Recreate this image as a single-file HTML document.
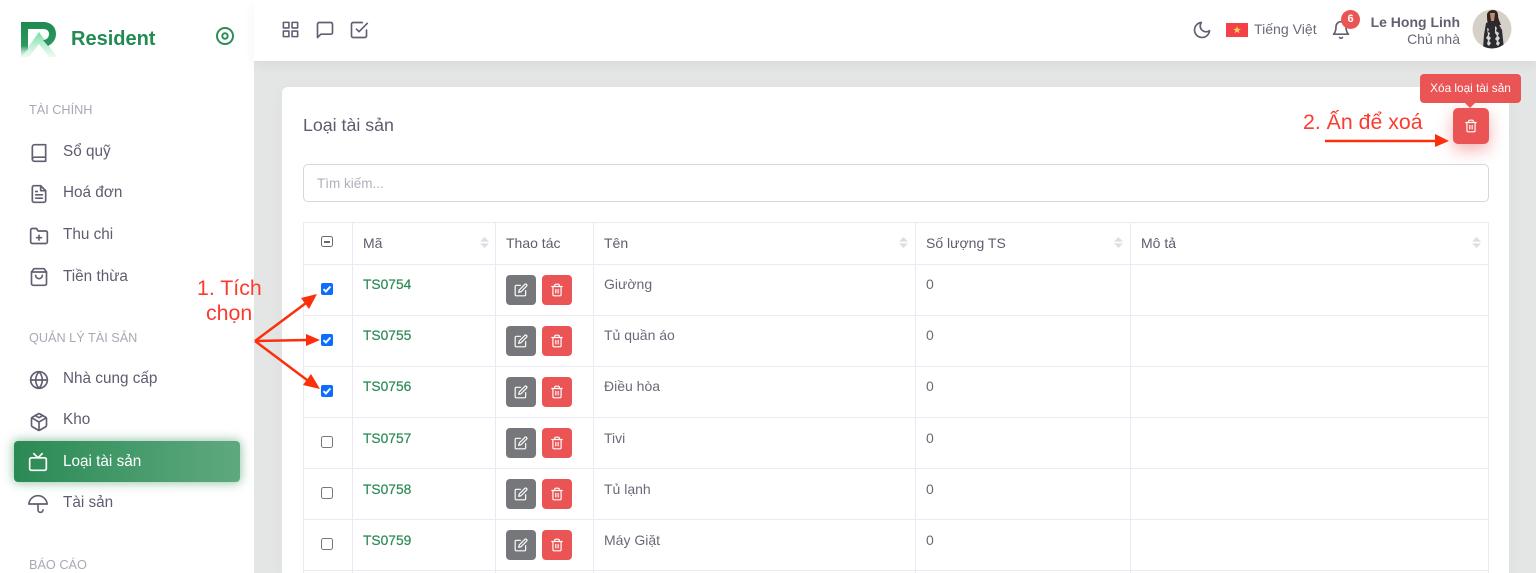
<!DOCTYPE html>
<html lang="vi"><head><meta charset="utf-8"><title>Loại tài sản</title>
<style>
*{box-sizing:border-box}
html{margin:0;padding:0;width:1536px;height:573px;overflow:hidden;background:#e4e5e5}
body{margin:0;padding:0;width:1536px;height:573px;overflow:hidden;position:relative;background:#e4e5e5;font-family:"Liberation Sans","Noto Sans CJK SC",sans-serif;color:#5e5c6e;filter:blur(.3px)}
.a{position:absolute;white-space:nowrap}
#side{position:absolute;left:0;top:0;width:254px;height:573px;background:#fff}
#top{position:absolute;left:254px;top:0;width:1282px;height:61px;background:#fff;box-shadow:0 4px 12px rgba(0,0,0,.05)}
.sec{position:absolute;left:29px;font-size:12.7px;color:#a9a8b5;line-height:16px;white-space:nowrap}
.item{position:absolute;left:63px;font-size:15.3px;line-height:20px;color:#5e5c6e;white-space:nowrap}
svg.i{position:absolute;fill:none;stroke:#625f72;stroke-width:2;stroke-linecap:round;stroke-linejoin:round}
#card{position:absolute;left:282px;top:87px;width:1227px;height:486px;background:#fff;border-radius:6px 6px 0 0;box-shadow:0 4px 20px rgba(0,0,0,.03)}
.ln{position:absolute;height:1px;left:303px;width:1186px;background:#ebe9f3}
.lv{position:absolute;width:1px;top:222px;height:351px;background:#ebe9f3}
.th{position:absolute;font-size:14px;line-height:16px;color:#5e5c6e;white-space:nowrap;top:235px}
.code{position:absolute;left:363px;font-size:13.8px;line-height:16px;color:#2e8b57;white-space:nowrap;-webkit-text-stroke:.2px #2e8b57}
.nm{position:absolute;left:604px;font-size:14px;line-height:16px;color:#6b6978;white-space:nowrap}
.z{position:absolute;left:926px;font-size:14px;line-height:16px;color:#6b6978}
.btn{position:absolute;width:30px;height:30px;border-radius:4px}
.btn svg{position:absolute;left:8px;top:8px;width:14px;height:14px;fill:none;stroke:#fff;stroke-width:2;stroke-linecap:round;stroke-linejoin:round}
.g{background:#75777a}.r{background:#ea5455}
.cb{position:absolute;left:321px;width:12px;height:12px;border-radius:2px;background:#0d6efd}
.cb svg{position:absolute;left:0;top:0;width:12px;height:12px;fill:none;stroke:#fff;stroke-width:2}
.cu{position:absolute;left:321px;width:12px;height:12px;border-radius:2.5px;border:1px solid #77767c;background:#fff}
.sort{position:absolute;width:9px;height:11px}
.red{position:absolute;color:#fb3b30;font-size:21.3px;line-height:26px;white-space:nowrap}
</style></head><body>

<div id="side"></div>
<div id="top"></div>

<!-- logo -->
<svg class="a" style="left:21px;top:22px" width="36" height="36" viewBox="0 0 36 36">
<defs>
<linearGradient id="lg1" x1="0" y1="0" x2="0" y2="1"><stop offset="0" stop-color="#1f8a50"/><stop offset=".68" stop-color="#2c9860"/><stop offset="1" stop-color="#b8e8cc" stop-opacity=".3"/></linearGradient>
<linearGradient id="lg2" x1="0" y1="0" x2="0" y2="1"><stop offset="0" stop-color="#6fdc9f"/><stop offset="1" stop-color="#d8f7e4" stop-opacity=".5"/></linearGradient>
</defs>
<path d="M18 10L36 35H28L18 22L8 35H0Z" fill="url(#lg2)"/>
<path d="M0 0H22C30 0 35 5 35 12C35 18 31 22 27 24L22 18C26 18 28 15 28 12C28 9 26 7 22 7H7V27L0 35Z" fill="url(#lg1)"/>
</svg>
<div class="a" style="left:71px;top:27px;font-size:20px;line-height:24px;font-weight:700;color:#238a52">Resident</div>
<svg class="a" style="left:215px;top:26px" width="20" height="20" viewBox="0 0 20 20" fill="none" stroke="#2b8d57" stroke-width="2"><circle cx="10" cy="10" r="8"/><circle cx="10" cy="10" r="2.7"/></svg>

<!-- sidebar -->
<div class="sec" style="top:102px">TÀI CHÍNH</div>
<svg class="i" style="left:29px;top:143px" width="20" height="20" viewBox="0 0 24 24"><path d="M4 19.5A2.5 2.5 0 0 1 6.500 17H20"/><path d="M6.500 2H20v20H6.500A2.500 2.500 0 0 1 4 19.500v-15A2.500 2.500 0 0 1 6.500 2z"/></svg>
<div class="item" style="top:142px">Sổ quỹ</div>
<svg class="i" style="left:29px;top:184px" width="20" height="20" viewBox="0 0 24 24"><path d="M14 2H6a2 2 0 0 0-2 2v16a2 2 0 0 0 2 2h12a2 2 0 0 0 2-2V8z"/><path d="M14 2v6h6M16 13H8M16 17H8M10 9H8"/></svg>
<div class="item" style="top:183px">Hoá đơn</div>
<svg class="i" style="left:29px;top:226px" width="20" height="20" viewBox="0 0 24 24"><path d="M22 19a2 2 0 0 1-2 2H4a2 2 0 0 1-2-2V5a2 2 0 0 1 2-2h5l2 3h9a2 2 0 0 1 2 2z"/><path d="M12 11v6M9 14h6"/></svg>
<div class="item" style="top:225px">Thu chi</div>
<svg class="i" style="left:29px;top:267px" width="20" height="20" viewBox="0 0 24 24"><path d="M6 2 3 6v14a2 2 0 0 0 2 2h14a2 2 0 0 0 2-2V6l-3-4z"/><path d="M3 6h18M16 10a4 4 0 0 1-8 0"/></svg>
<div class="item" style="top:267px">Tiền thừa</div>

<div class="sec" style="top:330px">QUẢN LÝ TÀI SẢN</div>
<svg class="i" style="left:29px;top:370px" width="20" height="20" viewBox="0 0 24 24"><circle cx="12" cy="12" r="10"/><path d="M2 12h20M12 2a15.300 15.300 0 0 1 4 10 15.300 15.300 0 0 1-4 10 15.300 15.300 0 0 1-4-10 15.300 15.300 0 0 1 4-10z"/></svg>
<div class="item" style="top:369px">Nhà cung cấp</div>
<svg class="i" style="left:29px;top:412px" width="20" height="20" viewBox="0 0 24 24"><path d="M21 16V8a2 2 0 0 0-1-1.730l-7-4a2 2 0 0 0-2 0l-7 4A2 2 0 0 0 3 8v8a2 2 0 0 0 1 1.730l7 4a2 2 0 0 0 2 0l7-4A2 2 0 0 0 21 16z"/><path d="M7.500 4.200l4.500 2.600 4.500-2.600M3.300 7 12 12l8.700-5M12 22V12"/></svg>
<div class="item" style="top:410px">Kho</div>

<div class="a" style="left:14px;top:441px;width:226px;height:41px;border-radius:4px;background:linear-gradient(90deg,#2a8a54,#5fa97f);box-shadow:0 0 10px 1px rgba(46,139,87,.5)"></div>
<svg class="i" style="left:28px;top:452px;stroke:#fff" width="20" height="20" viewBox="0 0 24 24"><rect x="2" y="7" width="20" height="15" rx="2"/><path d="M17 2l-5 5-5-5"/></svg>
<div class="item" style="top:452px;color:#fff">Loại tài sản</div>

<svg class="i" style="left:28px;top:494px" width="20" height="20" viewBox="0 0 24 24"><path d="M23 12a11.050 11.050 0 0 0-22 0zm-5 7a3 3 0 0 1-6 0v-7"/></svg>
<div class="item" style="top:493px">Tài sản</div>
<div class="sec" style="top:557px">BÁO CÁO</div>

<!-- top icons -->
<svg class="i" style="left:281px;top:20px" width="19" height="19" viewBox="0 0 24 24"><rect x="3" y="3" width="7" height="7"/><rect x="14" y="3" width="7" height="7"/><rect x="14" y="14" width="7" height="7"/><rect x="3" y="14" width="7" height="7"/></svg>
<svg class="i" style="left:315px;top:20px" width="20" height="20" viewBox="0 0 24 24"><path d="M21 15a2 2 0 0 1-2 2H7l-4 4V5a2 2 0 0 1 2-2h14a2 2 0 0 1 2 2z"/></svg>
<svg class="i" style="left:349px;top:20px" width="20" height="20" viewBox="0 0 24 24"><path d="M9 11l3 3L22 4"/><path d="M21 12v7a2 2 0 0 1-2 2H5a2 2 0 0 1-2-2V5a2 2 0 0 1 2-2h11"/></svg>

<!-- top right -->
<svg class="i" style="left:1192px;top:20px" width="20" height="20" viewBox="0 0 24 24"><path d="M21 12.790A9 9 0 1 1 11.210 3 7 7 0 0 0 21 12.790z"/></svg>
<svg class="a" style="left:1226px;top:23px" width="22" height="14" viewBox="0 0 22 14"><rect width="22" height="14" fill="#f5404a"/><path d="M11 3.200l1 2.700h2.900l-2.300 1.700.9 2.700-2.500-1.700-2.400 1.700.9-2.700-2.300-1.700H10z" fill="#fbd94e"/></svg>
<div class="a" style="left:1254px;top:21px;font-size:14.1px;line-height:17px;color:#6b6978">Tiếng Việt</div>
<svg class="i" style="left:1331px;top:20px" width="20" height="20" viewBox="0 0 24 24"><path d="M18 8A6 6 0 0 0 6 8c0 7-3 9-3 9h18s-3-2-3-9"/><path d="M13.730 21a2 2 0 0 1-3.460 0"/></svg>
<div class="a" style="left:1341px;top:10px;width:19px;height:19px;border-radius:50%;background:#ea5455;color:#fff;font-size:11px;font-weight:700;line-height:19px;text-align:center">6</div>
<div class="a" style="right:76px;top:14px;font-size:14px;line-height:16px;font-weight:700;color:#625f72">Le Hong Linh</div>
<div class="a" style="right:76px;top:31px;font-size:14px;line-height:16px;color:#6b6978">Chủ nhà</div>
<svg class="a" style="left:1472px;top:9px" width="40" height="40" viewBox="0 0 40 40">
<defs><clipPath id="av"><circle cx="20" cy="20" r="19.500"/></clipPath></defs>
<g clip-path="url(#av)"><rect width="40" height="40" fill="#d6d1c8"/>
<path d="M15 6c0-3 3-5 6-5s5 2 5 5c0 4 2 7 3 10l-4 0-9-1c-1-3-1-6-1-9z" fill="#33231e"/>
<path d="M18 4h5l-1 8h-3z" fill="#bb8c76"/>
<path d="M14 14l6-2 6 2 4 7 2 19H11l1-14z" fill="#2b2b30"/>
<path d="M15 19l2 1-1 3 2 1-1 3 2 2-2 3 2 2-2 3-2-2 1-4-2-2 2-3zM23 17l2 2-1 3 3 2-1 3 2 2-2 3 2 2-2 3-2-2 1-3-2-2 2-3-2-3z" fill="#d8d6d2"/></g></svg>

<!-- card -->
<div id="card"></div>
<div class="a" style="left:303px;top:115px;font-size:17.8px;line-height:20px;color:#5e5c6e">Loại tài sản</div>
<div class="a" style="left:303px;top:164px;width:1186px;height:38px;border:1px solid #d8d6de;border-radius:5px;background:#fff"></div>
<div class="a" style="left:317px;top:176px;font-size:13.5px;line-height:16px;color:#b0afba">Tìm kiếm...</div>

<!-- delete + tooltip -->
<div class="a" style="left:1453px;top:108px;width:36px;height:36px;border-radius:5px;background:#ea5455;box-shadow:0 6px 16px rgba(234,84,85,.45)"></div>
<svg class="a" style="left:1464px;top:119px;fill:none;stroke:#fff;stroke-width:2;stroke-linecap:round;stroke-linejoin:round" width="14" height="14" viewBox="0 0 24 24"><path d="M3 6h18M19 6v14a2 2 0 0 1-2 2H7a2 2 0 0 1-2-2V6m3 0V4a2 2 0 0 1 2-2h4a2 2 0 0 1 2 2v2M10 11v6M14 11v6"/></svg>
<div class="a" style="left:1420px;top:74px;width:101px;height:29px;border-radius:4px;background:#ea5455;color:#fff;font-size:11.8px;line-height:29px;text-align:center">Xóa loại tài sản</div>
<div class="a" style="left:1465px;top:103px;width:0;height:0;border-left:5px solid transparent;border-right:5px solid transparent;border-top:5px solid #ea5455"></div>

<!-- table lines -->
<div class="ln" style="top:222px"></div><div class="ln" style="top:264px"></div><div class="ln" style="top:315px"></div><div class="ln" style="top:366px"></div><div class="ln" style="top:417px"></div><div class="ln" style="top:468px"></div><div class="ln" style="top:519px"></div><div class="ln" style="top:570px"></div>
<div class="lv" style="left:303px"></div><div class="lv" style="left:352px"></div><div class="lv" style="left:495px"></div><div class="lv" style="left:593px"></div><div class="lv" style="left:915px"></div><div class="lv" style="left:1130px"></div><div class="lv" style="left:1488px"></div>

<!-- header -->
<div class="a" style="left:321px;top:236px;width:12px;height:11px;border:1px solid #6b6a70;border-radius:2.5px"><div style="position:absolute;left:2px;top:3.5px;width:6px;height:2px;background:#6b6a70"></div></div>
<div class="th" style="left:363px">Mã</div><div class="th" style="left:506px">Thao tác</div><div class="th" style="left:604px">Tên</div><div class="th" style="left:926px">Số lượng TS</div><div class="th" style="left:1141px">Mô tả</div>
<svg class="sort" style="left:480px;top:237px" viewBox="0 0 9 13" preserveAspectRatio="none"><path d="M4.500 0L9 5.500H0zM4.500 13L0 7.500h9z" fill="#dedde4"/></svg>
<svg class="sort" style="left:899px;top:237px" viewBox="0 0 9 13" preserveAspectRatio="none"><path d="M4.500 0L9 5.500H0zM4.500 13L0 7.500h9z" fill="#dedde4"/></svg>
<svg class="sort" style="left:1114px;top:237px" viewBox="0 0 9 13" preserveAspectRatio="none"><path d="M4.500 0L9 5.500H0zM4.500 13L0 7.500h9z" fill="#dedde4"/></svg>
<svg class="sort" style="left:1472px;top:237px" viewBox="0 0 9 13" preserveAspectRatio="none"><path d="M4.500 0L9 5.500H0zM4.500 13L0 7.500h9z" fill="#dedde4"/></svg>

<!-- rows -->
<div class="cb" style="top:283px"><svg viewBox="0 0 12 12"><path d="M2.500 6.200l2.400 2.300 4.500-5"/></svg></div>
<div class="code" style="top:277px">TS0754</div><div class="nm" style="top:276px">Giường</div><div class="z" style="top:276px">0</div>
<div class="btn g" style="left:506px;top:275px"><svg viewBox="0 0 24 24"><path d="M11 4H4a2 2 0 0 0-2 2v14a2 2 0 0 0 2 2h14a2 2 0 0 0 2-2v-7"/><path d="M18.500 2.500a2.121 2.121 0 0 1 3 3L12 15l-4 1 1-4z"/></svg></div>
<div class="btn r" style="left:542px;top:275px"><svg viewBox="0 0 24 24"><path d="M3 6h18M19 6v14a2 2 0 0 1-2 2H7a2 2 0 0 1-2-2V6m3 0V4a2 2 0 0 1 2-2h4a2 2 0 0 1 2 2v2M10 11v6M14 11v6"/></svg></div>

<div class="cb" style="top:334px"><svg viewBox="0 0 12 12"><path d="M2.500 6.200l2.400 2.300 4.500-5"/></svg></div>
<div class="code" style="top:328px">TS0755</div><div class="nm" style="top:327px">Tủ quần áo</div><div class="z" style="top:327px">0</div>
<div class="btn g" style="left:506px;top:326px"><svg viewBox="0 0 24 24"><path d="M11 4H4a2 2 0 0 0-2 2v14a2 2 0 0 0 2 2h14a2 2 0 0 0 2-2v-7"/><path d="M18.500 2.500a2.121 2.121 0 0 1 3 3L12 15l-4 1 1-4z"/></svg></div>
<div class="btn r" style="left:542px;top:326px"><svg viewBox="0 0 24 24"><path d="M3 6h18M19 6v14a2 2 0 0 1-2 2H7a2 2 0 0 1-2-2V6m3 0V4a2 2 0 0 1 2-2h4a2 2 0 0 1 2 2v2M10 11v6M14 11v6"/></svg></div>

<div class="cb" style="top:384.5px"><svg viewBox="0 0 12 12"><path d="M2.500 6.200l2.400 2.300 4.500-5"/></svg></div>
<div class="code" style="top:379px">TS0756</div><div class="nm" style="top:378px">Điều hòa</div><div class="z" style="top:378px">0</div>
<div class="btn g" style="left:506px;top:377px"><svg viewBox="0 0 24 24"><path d="M11 4H4a2 2 0 0 0-2 2v14a2 2 0 0 0 2 2h14a2 2 0 0 0 2-2v-7"/><path d="M18.500 2.500a2.121 2.121 0 0 1 3 3L12 15l-4 1 1-4z"/></svg></div>
<div class="btn r" style="left:542px;top:377px"><svg viewBox="0 0 24 24"><path d="M3 6h18M19 6v14a2 2 0 0 1-2 2H7a2 2 0 0 1-2-2V6m3 0V4a2 2 0 0 1 2-2h4a2 2 0 0 1 2 2v2M10 11v6M14 11v6"/></svg></div>

<div class="cu" style="top:435.5px"></div>
<div class="code" style="top:431px">TS0757</div><div class="nm" style="top:430px">Tivi</div><div class="z" style="top:430px">0</div>
<div class="btn g" style="left:506px;top:428px"><svg viewBox="0 0 24 24"><path d="M11 4H4a2 2 0 0 0-2 2v14a2 2 0 0 0 2 2h14a2 2 0 0 0 2-2v-7"/><path d="M18.500 2.500a2.121 2.121 0 0 1 3 3L12 15l-4 1 1-4z"/></svg></div>
<div class="btn r" style="left:542px;top:428px"><svg viewBox="0 0 24 24"><path d="M3 6h18M19 6v14a2 2 0 0 1-2 2H7a2 2 0 0 1-2-2V6m3 0V4a2 2 0 0 1 2-2h4a2 2 0 0 1 2 2v2M10 11v6M14 11v6"/></svg></div>

<div class="cu" style="top:486.5px"></div>
<div class="code" style="top:482px">TS0758</div><div class="nm" style="top:481px">Tủ lạnh</div><div class="z" style="top:481px">0</div>
<div class="btn g" style="left:506px;top:479px"><svg viewBox="0 0 24 24"><path d="M11 4H4a2 2 0 0 0-2 2v14a2 2 0 0 0 2 2h14a2 2 0 0 0 2-2v-7"/><path d="M18.500 2.500a2.121 2.121 0 0 1 3 3L12 15l-4 1 1-4z"/></svg></div>
<div class="btn r" style="left:542px;top:479px"><svg viewBox="0 0 24 24"><path d="M3 6h18M19 6v14a2 2 0 0 1-2 2H7a2 2 0 0 1-2-2V6m3 0V4a2 2 0 0 1 2-2h4a2 2 0 0 1 2 2v2M10 11v6M14 11v6"/></svg></div>

<div class="cu" style="top:537.5px"></div>
<div class="code" style="top:533px">TS0759</div><div class="nm" style="top:532px">Máy Giặt</div><div class="z" style="top:532px">0</div>
<div class="btn g" style="left:506px;top:530px"><svg viewBox="0 0 24 24"><path d="M11 4H4a2 2 0 0 0-2 2v14a2 2 0 0 0 2 2h14a2 2 0 0 0 2-2v-7"/><path d="M18.500 2.500a2.121 2.121 0 0 1 3 3L12 15l-4 1 1-4z"/></svg></div>
<div class="btn r" style="left:542px;top:530px"><svg viewBox="0 0 24 24"><path d="M3 6h18M19 6v14a2 2 0 0 1-2 2H7a2 2 0 0 1-2-2V6m3 0V4a2 2 0 0 1 2-2h4a2 2 0 0 1 2 2v2M10 11v6M14 11v6"/></svg></div>

<!-- annotations -->
<div class="red" style="left:197px;top:275px">1. Tích</div>
<div class="red" style="left:206px;top:300px">chọn</div>
<div class="red" style="left:1303px;top:109px">2. Ấn để xoá</div>
<svg class="a" style="left:0;top:0" width="1536" height="573" viewBox="0 0 1536 573" fill="none">
<g stroke="#fb2f0c" stroke-width="2.5">
<path d="M255 341L306 303"/><path d="M255 341L307 340"/><path d="M255 341L307 380"/><path d="M1325 141H1436"/>
</g>
<g fill="#fb2f0c">
<path d="M317 294L301 298L309 309Z"/><path d="M320 340L306 334V346Z"/><path d="M320 389L311 374L303 385Z"/><path d="M1449 141L1435 134V147Z"/>
</g></svg>
</body></html>
